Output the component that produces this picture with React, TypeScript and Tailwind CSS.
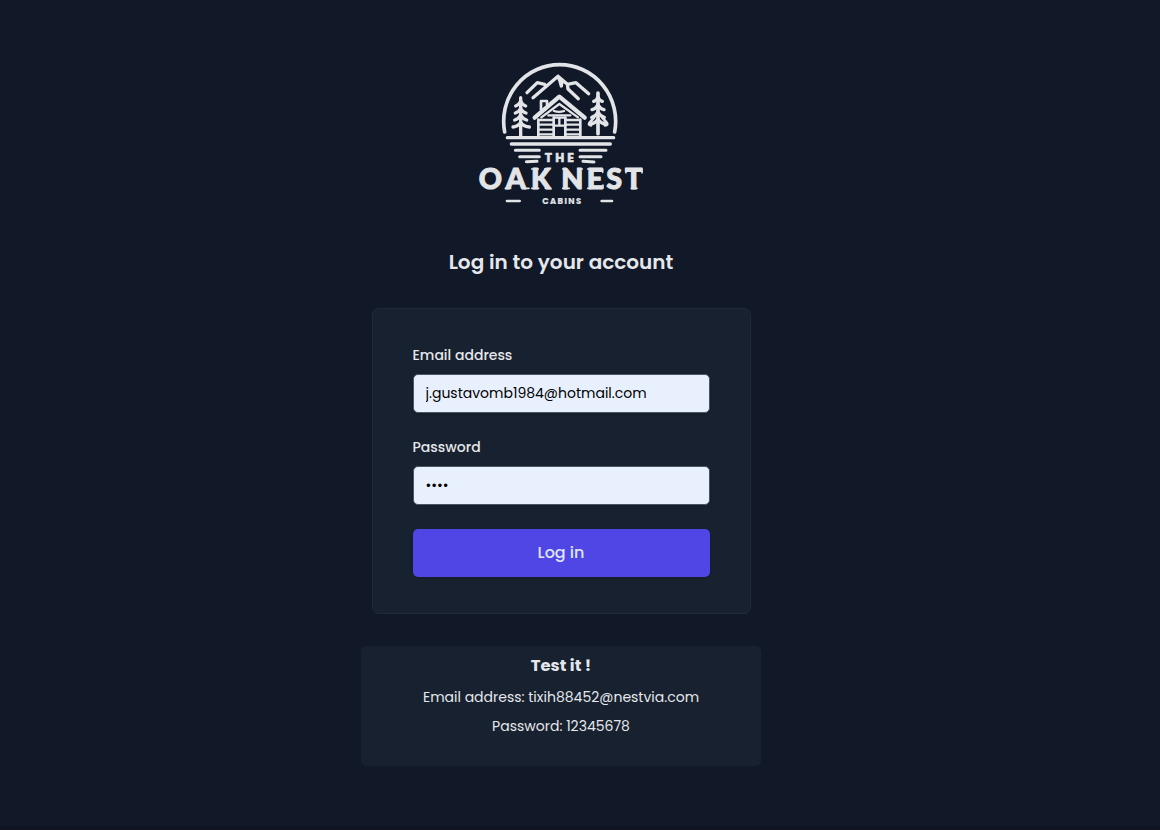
import type { ReactNode } from 'react';

function Tree({ x, top }: { x: number; top: number }) {
  return (
    <g transform={`translate(${x} ${top})`}>
      <path d="M0 0V122" strokeWidth="11" />
      <path d="M-13 25Q-3 22 0 12Q3 22 13 25M-18 50Q-5 47 0 34Q5 47 18 50M-19 73Q-6 70 0 57Q6 70 19 73M-22 93Q-7 90 0 79Q7 90 22 93" strokeWidth="10" />
    </g>
  );
}

function Logo() {
  return (
    <svg width="180" height="160" viewBox="3 0 540 480" fill="none" stroke="#e2e4e7" strokeLinecap="round" strokeLinejoin="round" role="img" aria-label="The Oak Nest Cabins">
      <path d="M104 231A168 170 0 1 1 434 231" strokeWidth="11" />
      <path d="M171 113L202 83L224 88M189 128L264 64L292 88L318 83L356 116M264 64L270 78L274 93L276 76M292 88L294 102L325 131" strokeWidth="10" />
      <g transform="translate(152 124)">
        <path d="M0 4V120" strokeWidth="10" />
        <path d="M-15 29Q-4 25 0 14Q4 25 15 29M-16 50Q-5 47 0 36Q5 47 16 50M-18 71Q-6 68 0 56Q6 68 18 71M-23 92Q-7 90 0 78Q7 90 26 92" strokeWidth="10" />
      </g>
      <Tree x={384} top={114} />
      <path d="M363 211Q353 210 359 203L372 188M405 211Q416 210 410 203L397 188" strokeWidth="8" />
      <path d="M213 164V138H231V149" strokeWidth="8" />
      <path d="M194 188L268 125L344 188" strokeWidth="13" />
      <path d="M205 190L268 139L333 190" stroke="#111827" strokeWidth="2" />
      <path d="M214 187L268 147L324 187" strokeWidth="7" />
      <path d="M252 168Q267 173 282 168M235 181H301" strokeWidth="7" />
      <path d="M205 194V242M331 194V242M251 188V242M286 188V242" strokeWidth="8" />
      <path d="M208 195H248M208 209H248M208 224H248M208 238H248M289 195H329M289 209H329M289 224H329M289 238H329M252 188H286M252 212H286M268 190V211" strokeWidth="7" />
      <path d="M112 248H431M124 267H421" strokeWidth="10" />
      <path d="M136 286H208M330 286H408M149 305H208M330 305H393M169 320L201 319M339 319L372 321" strokeWidth="9" />
      <path d="M111 438H149M395 438H426" strokeWidth="8" />
      <g fill="#e2e4e7">
        <text x="224" y="321" textLength="88" fontSize="37" strokeWidth="1.5" className="font-[Poppins,sans-serif] font-bold">THE</text>
        <text y="402" x="26 107 183" fontSize="86" strokeWidth="3" className="font-[Lato,sans-serif] font-black">OAK</text>
        <text y="402" x="274 350 409 465" fontSize="86" strokeWidth="3" className="font-[Lato,sans-serif] font-black">NEST</text>
        <path d="M106 400H122M160 400H177M185 342H205M185 400H206M224 342H240M226 400H242M278 342H290M278 400H298M323 342H337M353 342H364M353 400H364M398 342V352M399 390V400M468 342V353M516 342V353M484 400H501" strokeWidth="5" />
        <text x="217" y="446" textLength="116" fontSize="25" strokeWidth="0.5" className="font-[Poppins,sans-serif] font-bold">CABINS</text>
      </g>
    </svg>
  );
}

function Field({ label, children }: { label: string; children: ReactNode }) {
  return (
    <label className="flex flex-col gap-2">
      <span className="text-sm leading-[22px] font-medium">{label}</span>
      {children}
    </label>
  );
}

const inputClass = 'h-[39px] w-full rounded-[5px] border border-[#4b5563] bg-[#e8f0fe] px-3 text-sm text-black shadow-sm outline-none';

export default function App() {
  return (
    <main className="flex h-[830px] flex-col items-center border-b-4 border-[#0f1420] bg-[#111827] pt-[55px] pr-[38px] font-[Poppins,Inter,sans-serif] text-[#e5e7eb]">
      <Logo />
      <h1 className="mt-[31px] text-xl leading-8 font-semibold">Log in to your account</h1>
      <form className="mt-[30px] flex h-[306px] w-[379px] flex-col rounded-[7px] border border-[#1f2937] bg-[#18212f] px-10 pt-[35px]">
        <div className="flex flex-col gap-[23px]">
          <Field label="Email address">
            <input className={inputClass} type="text" defaultValue="j.gustavomb1984@hotmail.com" />
          </Field>
          <Field label="Password">
            <input className={inputClass} type="password" defaultValue="1234" />
          </Field>
        </div>
        <button type="button" className="mt-6 h-12 shrink-0 rounded-[5px] bg-[#4f46e5] font-medium text-[#e0e7ff] shadow-sm">Log in</button>
      </form>
      <section className="mt-8 flex h-[120px] w-[400px] flex-col items-center rounded-[5px] bg-[#18212f] pt-2">
        <h2 className="text-[16.4px] leading-6 font-bold">Test it !</h2>
        <p className="mt-2 text-sm leading-[22px]">Email address: tixih88452@nestvia.com</p>
        <p className="mt-[7px] text-sm leading-[22px]">Password: 12345678</p>
      </section>
    </main>
  );
}
